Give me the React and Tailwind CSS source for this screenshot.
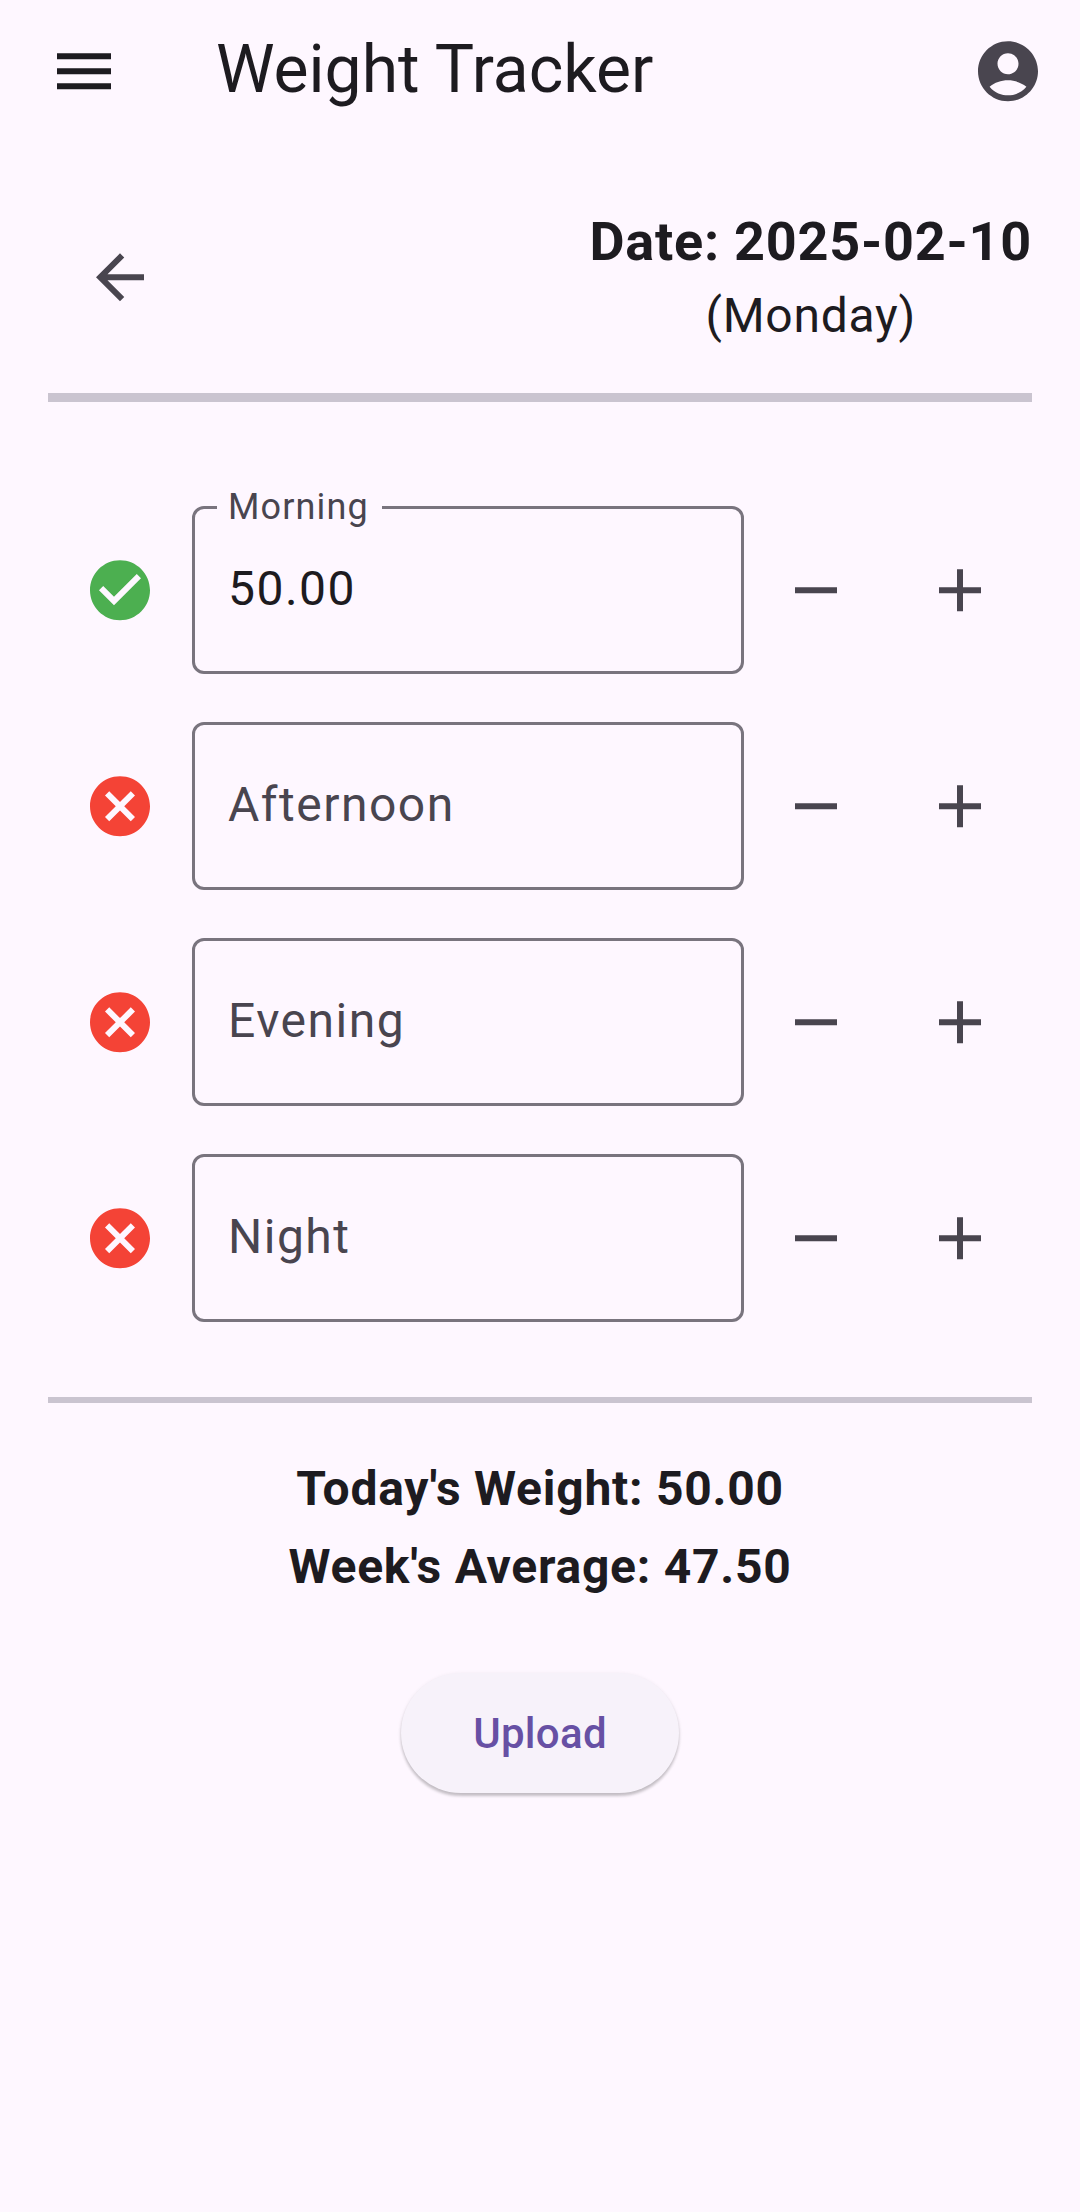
import React from "react";

const PATHS = {
  menu: "M3 18h18v-2H3v2zm0-5h18v-2H3v2zm0-7v2h18V6H3z",
  account:
    "M12 2C6.48 2 2 6.48 2 12s4.48 10 10 10 10-4.48 10-10S17.52 2 12 2zm0 4c1.93 0 3.5 1.57 3.5 3.5S13.93 13 12 13s-3.5-1.57-3.5-3.5S10.07 6 12 6zm0 14c-2.03 0-4.43-.82-6.14-2.88C7.55 15.8 9.68 15 12 15s4.45.8 6.14 2.12C16.43 19.18 14.03 20 12 20z",
  back: "M20 11H7.83l5.59-5.59L12 4l-8 8 8 8 1.41-1.41L7.83 13H20v-2z",
  check:
    "M12 2C6.48 2 2 6.48 2 12s4.48 10 10 10 10-4.48 10-10S17.52 2 12 2zm-2 15l-5-5 1.41-1.41L10 14.17l7.59-7.59L19 8l-9 9z",
  cancel:
    "M12 2C6.47 2 2 6.47 2 12s4.47 10 10 10 10-4.47 10-10S17.53 2 12 2zm5 13.59L15.59 17 12 13.41 8.41 17 7 15.59 10.59 12 7 8.41 8.41 7 12 10.59 15.59 7 17 8.41 13.41 12 17 15.59z",
  minus: "M19 13H5v-2h14v2z",
  plus: "M19 13h-6v6h-2v-6H5v-2h6V5h2v6h6v2z",
};

function Icon({ name, className = "" }) {
  return (
    <svg viewBox="0 -0.11 24 24" className={`size-[72px] shrink-0 ${className}`} fill="currentColor">
      <path d={PATHS[name]} />
    </svg>
  );
}

function IconButton({ name, label }) {
  return (
    <button aria-label={label} className="flex size-36 items-center justify-center text-[#49454f]">
      <Icon name={name} />
    </button>
  );
}

function WeightRow({ label, value }) {
  return (
    <div className="flex h-[168px] items-center">
      <div className="flex size-36 items-center justify-center">
        {value ? (
          <Icon name="check" className="text-[#4caf50]" />
        ) : (
          <Icon name="cancel" className="text-[#f44336]" />
        )}
      </div>
      <div className="relative h-full w-[552px] rounded-xl border-3 border-[#79747e] px-[33px] pt-[51px] text-[48px] leading-[57px] tracking-[1.5px]">
        {value ? (
          <>
            <span className="absolute -top-[23px] left-[22px] w-[165px] bg-[#fef7ff] pl-[11px] text-[36px] leading-[42px] tracking-[1.125px] text-[#49454f]">
              {label}
            </span>
            <div>{value}</div>
          </>
        ) : (
          <div className="text-[#49454f]">{label}</div>
        )}
      </div>
      <IconButton name="minus" label={`Decrease ${label}`} />
      <IconButton name="plus" label={`Increase ${label}`} />
    </div>
  );
}

const ROWS = [
  { label: "Morning", value: "50.00" },
  { label: "Afternoon" },
  { label: "Evening" },
  { label: "Night" },
];

export default function App() {
  return (
    <div className="flex h-[2212px] w-[1080px] flex-col overflow-hidden bg-[#fef7ff] font-['Roboto',sans-serif] text-[#1d1b20]">
      <header className="flex h-[142px] items-center pr-9 pl-12">
        <Icon name="menu" />
        <h1 className="mb-[3px] ml-24 flex-1 text-[66px] leading-[83px]">Weight Tracker</h1>
        <Icon name="account" className="text-[#49454f]" />
      </header>

      <main className="flex flex-col px-12 pt-[60px]">
        <div className="flex h-[150px] justify-between">
          <div className="flex w-36 items-center justify-center">
            <Icon name="back" className="text-[#49454f]" />
          </div>
          <div className="text-center">
            <div className="text-[54px] leading-[79px] font-bold tracking-[0.75px]">Date: 2025-02-10</div>
            <div className="text-[48px] leading-[69px] tracking-[0.75px]">(Monday)</div>
          </div>
        </div>

        <div className="mt-[41px] h-[9px] bg-[#cac4d0]" />

        <div className="mt-[104px] flex flex-col gap-12">
          {ROWS.map((row) => (
            <WeightRow key={row.label} {...row} />
          ))}
        </div>

        <div className="mt-[75px] h-[6px] bg-[#cac4d0]" />

        <div className="mt-[57px] flex flex-col items-center gap-[21px] text-[48px] leading-[57px] font-bold tracking-[0.75px]">
          <div>Today's Weight: 50.00</div>
          <div>Week's Average: 47.50</div>
        </div>

        <button className="mt-[78px] h-[120px] w-[278px] self-center rounded-full bg-[#f7f2fa] pt-px text-[42px] leading-[49px] font-medium tracking-[0.3px] text-[#6750a4] shadow-[0_3px_3px_rgba(0,0,0,0.2),0_1px_4px_rgba(0,0,0,0.08)]">
          Upload
        </button>
      </main>
    </div>
  );
}
